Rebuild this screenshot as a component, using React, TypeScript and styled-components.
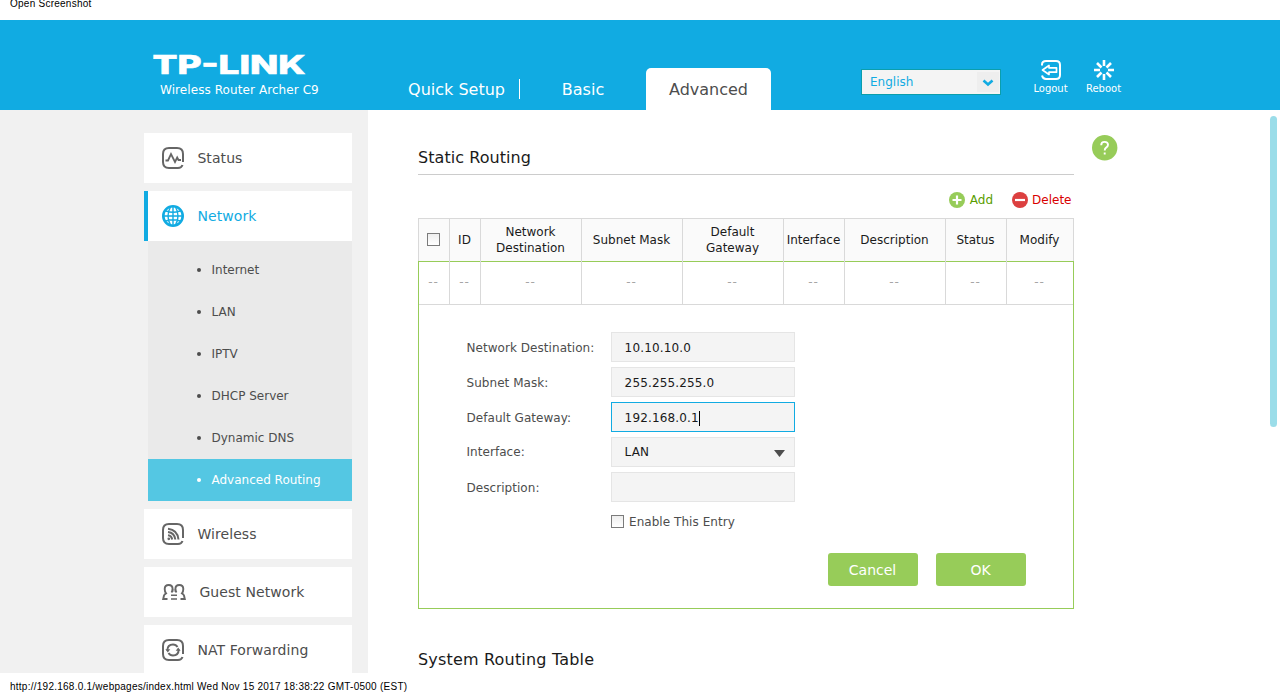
import type { ReactNode } from 'react'
import styled, { createGlobalStyle, css } from 'styled-components'

const GlobalStyle = createGlobalStyle`
  * {
    box-sizing: border-box;
  }

  body {
    margin: 0;
    background: #fff;
    color: #4d4d4d;
    font-family: 'DejaVu Sans', Verdana, sans-serif;
    font-size: 12px;
    overflow: hidden;
  }
`

const Page = styled.div`
  display: flex;
  flex-direction: column;
  height: 693px;
  overflow: hidden;
`

const Caption = styled.div<{ $top?: boolean }>`
  flex: none;
  height: 20px;
  padding-left: 10px;
  color: #000;
  font: 10px/12px 'Liberation Sans', Arial, sans-serif;
  letter-spacing: 0.25px;
  ${({ $top }) =>
    $top
      ? css`
          line-height: 8px;
        `
      : css`
          padding-top: 8px;
        `}
`

const Header = styled.header`
  display: flex;
  flex: none;
  height: 90px;
  padding-left: 144px;
  background: #11abe2;
  color: #fff;
`

const Brand = styled.div`
  width: 240px;
  padding: 26px 0 0 8px;
`

const LogoSvg = styled.svg`
  display: block;
`

const Model = styled.div`
  padding-left: 8px;
  line-height: 16px;
  letter-spacing: 0.08px;
`

const Tabs = styled.nav`
  display: flex;
  align-items: flex-end;
  width: 477px;
`

const Tab = styled.a<{ $active?: boolean; $divider?: boolean }>`
  position: relative;
  display: flex;
  align-items: center;
  justify-content: center;
  width: ${({ $active, $divider }) => ($active ? 125 : $divider ? 136 : 126)}px;
  height: 42px;
  font-size: 16px;
  ${({ $divider }) =>
    $divider &&
    css`
      padding-left: 9px;

      &::after {
        content: '';
        position: absolute;
        right: 0;
        top: 11px;
        height: 20px;
        border-right: 1px solid #fff;
      }
    `}
  ${({ $active }) =>
    $active &&
    css`
      background: #fff;
      color: #4d4d4d;
      border-radius: 5px 5px 0 0;
    `}
`

const Language = styled.div`
  display: flex;
  align-items: center;
  justify-content: space-between;
  width: 140px;
  height: 26px;
  margin-top: 49px;
  padding: 0 1px 0 8px;
  background: #f4f4f4;
  border: 1px solid #0b9eac;
  color: #11abe2;
`

const LanguageArrow = styled.span`
  display: flex;
  align-items: center;
  justify-content: center;
  width: 22px;
  height: 20px;
  padding-top: 1px;
  background: #eee;
`

const HeaderAction = styled.a`
  display: flex;
  flex-direction: column;
  align-items: center;
  width: 53px;
  padding-top: 39px;
  font-size: 10px;
  line-height: 14px;

  svg {
    flex: none;
    margin-bottom: 1px;
  }
`

const HeaderActions = styled.div`
  display: flex;
  padding-left: 23px;
`

const Body = styled.div`
  display: flex;
  flex: 1;
  min-height: 0;
  overflow: hidden;
`

const Sidebar = styled.aside`
  display: flex;
  flex: none;
  flex-direction: column;
  gap: 8px;
  width: 368px;
  padding: 23px 16px 0 144px;
  background: #f1f1f1;
`

const MenuItem = styled.a<{ $active?: boolean }>`
  display: flex;
  flex: none;
  align-items: center;
  gap: 13.4px;
  height: 50px;
  padding-left: ${({ $active }) => ($active ? 14 : 18)}px;
  background: #fff;
  border-left: ${({ $active }) => ($active ? '4px solid #11abe2' : '0')};
  color: ${({ $active }) => ($active ? '#11abe2' : '#4d4d4d')};
  font-size: 14px;
  letter-spacing: 0.08px;
`

const Submenu = styled.ul`
  margin: 0 0 0 4px;
  padding: 8px 0 0;
  background: #eaeaea;
  list-style: none;
`

const SubmenuItem = styled.li<{ $active?: boolean }>`
  display: flex;
  align-items: center;
  gap: 10.5px;
  height: 42px;
  padding-left: 49px;
  background: ${({ $active }) => ($active ? '#54c7e3' : 'transparent')};
  color: ${({ $active }) => ($active ? '#fff' : '#4d4d4d')};

  &::before {
    content: '';
    width: 4px;
    height: 4px;
    border-radius: 50%;
    background: currentColor;
  }
`

const Main = styled.main`
  flex: none;
  width: 656px;
  margin-left: 50px;
`

const SectionTitle = styled.h2`
  height: 65px;
  margin: 0;
  padding-top: 38px;
  border-bottom: 1px solid #ccc;
  color: #1a1a1a;
  font-size: 16px;
  font-weight: 400;
  line-height: 20px;
  letter-spacing: 0.05px;
`

const Toolbar = styled.div`
  display: flex;
  align-items: center;
  justify-content: flex-end;
  gap: 18.5px;
  height: 43px;
  padding: 7px 2.5px 0 0;
`

const ToolbarButton = styled.a<{ $color: string }>`
  display: flex;
  align-items: center;
  gap: 4.5px;
  color: ${({ $color }) => $color};
`

const columns = '31px 31px 101px 101px 101px 61px 101px 61px 1fr'

const HeadRow = styled.div`
  display: grid;
  grid-template-columns: ${columns};
  height: 43px;
  background: #fafafa;
  border: 1px solid #d9d9d9;
  border-bottom: 0;
  color: #1a1a1a;
`

const EmptyRow = styled.div`
  display: grid;
  grid-template-columns: ${columns};
  height: 44px;
  border-bottom: 1px solid #d9d9d9;
  color: #a6a6a6;
  letter-spacing: 1px;
`

const Cell = styled.div`
  display: flex;
  align-items: center;
  justify-content: center;
  padding: 0 1px 1px 0;
  text-align: center;
  line-height: 16px;
  border-right: 1px solid #d9d9d9;

  &:last-child {
    border-right: 0;
  }

  ${EmptyRow} & {
    box-shadow: inset 0 1px #97cc59;
  }
`

const EditPanel = styled.div`
  height: 348px;
  border: solid #97cc59;
  border-width: 0 1px 1px;
`

const Form = styled.div`
  display: flex;
  flex-direction: column;
  gap: 5px;
  padding: 27px 47px 0 47px;
`

const Field = styled.div`
  display: flex;
  height: 30px;
`

const Label = styled.label<{ $raised?: boolean }>`
  width: 145px;
  padding-left: 0.5px;
  line-height: ${({ $raised }) => ($raised ? 30 : 32)}px;
  letter-spacing: 0.05px;
`

const Input = styled.div<{ $focused?: boolean }>`
  display: flex;
  align-items: center;
  justify-content: space-between;
  width: 184px;
  padding: 0 9px 0 12.6px;
  background: #f4f4f4;
  border: 1px solid ${({ $focused }) => ($focused ? '#11abe2' : '#e5e5e5')};
  color: #1a1a1a;
  letter-spacing: 0.15px;
`

const Value = styled.span<{ $caret?: boolean; $raised?: boolean }>`
  margin-top: ${({ $raised }) => ($raised ? 0 : 2)}px;
  line-height: 15px;
  border-right: ${({ $caret }) => ($caret ? '1px solid #000' : '0')};
`

const Checkbox = styled.span`
  flex: none;
  width: 13px;
  height: 13px;
  border: 1px solid #7b7b7b;
  background: linear-gradient(#eee, #fff);
`

const EnableRow = styled.div`
  display: flex;
  align-items: center;
  gap: 5px;
  height: 16px;
  margin: 7px 0 0 145px;
  letter-spacing: 0.05px;

  ${Checkbox} {
    margin-bottom: 2px;
  }
`

const Buttons = styled.div`
  display: flex;
  justify-content: flex-end;
  gap: 18px;
  margin-top: 18px;
`

const ActionButton = styled.button`
  width: 90px;
  height: 33px;
  padding: 0 1px 0 0;
  background: #97cc59;
  border: 0;
  border-radius: 3px;
  color: #fff;
  font: 14px 'DejaVu Sans', Verdana, sans-serif;
`

const NextTitle = styled.h2`
  margin: 41px 0 0;
  color: #1a1a1a;
  font-size: 16px;
  font-weight: 400;
  line-height: 20px;
  letter-spacing: 0.18px;
`

const HelpButton = styled.div`
  margin: 25px 0 0 18px;
`

const Scrollbar = styled.div`
  width: 7px;
  height: 311px;
  margin: 6px 3px 0 auto;
  background: #9bdde9;
  border-radius: 4px;
`

const Logo = () => (
  <LogoSvg width="170" height="36" viewBox="0 0 170 36" fill="#fff">
    <text
      x="0.5"
      y="27.6"
      textLength="153"
      lengthAdjust="spacingAndGlyphs"
      fontFamily="Inter, 'Liberation Sans', sans-serif"
      fontWeight="800"
      fontSize="26"
      stroke="#fff"
      strokeWidth="0.6"
    >
      TP-LINK
    </text>
  </LogoSvg>
)

const LogoutIcon = () => (
  <svg width="22" height="22" viewBox="0 0 22 22" fill="none" stroke="#fff" strokeWidth="2">
    <path d="M2 6.5V5.5Q2 2 6 2H16Q20 2 20 6V16Q20 20 16 20H6Q2.8 20 2 16.5" />
    <path d="M2.5 11L9 6.5V8.8H16.5V13.2H9V15.5Z" strokeWidth="1.7" strokeLinejoin="round" />
  </svg>
)

const RebootIcon = () => (
  <svg width="22" height="22" viewBox="0 0 22 22" stroke="#fff" strokeWidth="2.6">
    <path d="M11 1V7M11 15V21M1 11H7M15 11H21M4 4L8.5 8.5M13.5 13.5L18 18M18 4L13.5 8.5M8.5 13.5L4 18" />
  </svg>
)

// Rounded tile with a notch at the lower right, shared by most menu icons
const TileIcon = ({ children }: { children: ReactNode }) => (
  <svg width="22" height="22" viewBox="0 0 22 22" fill="none" stroke="#666" strokeWidth="2">
    <path d="M21 15V7Q21 1 15 1H7Q1 1 1 7V15Q1 21 7 21H16Q19.5 21 20.5 18" />
    {children}
  </svg>
)

const StatusIcon = () => (
  <TileIcon>
    <path d="M3.5 13.5H6L9 7L13 15L15.2 10.5L16.5 13H19" strokeWidth="1.8" />
  </TileIcon>
)

const GlobeIcon = () => (
  <svg width="22" height="22" viewBox="0 0 22 22" fill="none" stroke="#11abe2">
    <circle cx="11" cy="11" r="9.7" strokeWidth="2.6" />
    <path
      d="M11 1V21M2 11H20M4 6Q11 8.5 18 6M4 16Q11 13.5 18 16M8.5 2Q3.5 11 8.5 20M13.5 2Q18.5 11 13.5 20"
      strokeWidth="1.4"
    />
  </svg>
)

const WirelessIcon = () => (
  <TileIcon>
    <path
      d="M6 5.7Q15.5 6.7 16.5 16.5M6 9Q12.5 9.7 13.3 16.5M6 12.2Q9.5 12.7 10.2 16.5"
      strokeWidth="2"
    />
    <circle cx="6.8" cy="15.8" r="1.4" fill="#666" stroke="none" />
  </TileIcon>
)

const GuestIcon = () => (
  <svg width="24" height="16" viewBox="0 0 24 16" fill="none" stroke="#666" strokeWidth="1.9">
    <path d="M5.5 15H1.2L2 11.5Q2.5 10 4 9.3Q2.7 7.5 2.7 5Q2.7 1 6.7 1Q10.6 1 10.6 5Q10.6 7 9.5 8.5" />
    <path d="M18.5 15H22.8L22 11.5Q21.5 10 20 9.3Q21.3 7.5 21.3 5Q21.3 1 17.3 1Q13.4 1 13.4 5Q13.4 7 14.5 8.5" />
    <path d="M9 11.3H15M9 15H15M10.6 5V8M13.4 5V8" strokeWidth="1.5" />
  </svg>
)

const NatIcon = () => (
  <TileIcon>
    <path d="M5.3 11.5Q5.5 5.5 11 5.5Q14 5.5 15.5 8M16.7 10.5Q16.5 16.5 11 16.5Q8 16.5 6.5 14" />
    <path d="M3.4 10.3H8.3L5.8 13.5ZM13.7 11.7H18.6L16.2 8.5Z" fill="#666" stroke="none" />
  </TileIcon>
)

const RoundIcon = ({ color, plus }: { color: string; plus?: boolean }) => (
  <svg width="16" height="16" viewBox="0 0 16 16">
    <circle cx="8" cy="8" r="8" fill={color} />
    <path d={plus ? 'M3.5 8H12.5M8 3.5V12.5' : 'M3 8H13'} stroke="#fff" strokeWidth="2.2" />
  </svg>
)

const submenu = ['Internet', 'LAN', 'IPTV', 'DHCP Server', 'Dynamic DNS', 'Advanced Routing']

const headings = [
  'ID',
  'Network Destination',
  'Subnet Mask',
  'Default Gateway',
  'Interface',
  'Description',
  'Status',
  'Modify',
]

const fields = [
  { label: 'Network Destination:', value: '10.10.10.0' },
  { label: 'Subnet Mask:', value: '255.255.255.0' },
  { label: 'Default Gateway:', value: '192.168.0.1', focused: true },
  { label: 'Interface:', value: 'LAN', select: true },
  { label: 'Description:', value: '' },
]

const PageHeader = () => (
  <Header>
    <Brand>
      <Logo />
      <Model>Wireless Router Archer C9</Model>
    </Brand>
    <Tabs>
      <Tab $divider>Quick Setup</Tab>
      <Tab>Basic</Tab>
      <Tab $active>Advanced</Tab>
    </Tabs>
    <Language>
      English
      <LanguageArrow>
        <svg width="12" height="8" viewBox="0 0 12 8" fill="none" stroke="#11abe2" strokeWidth="2.6">
          <path d="M1.5 1.5L6 5.5L10.5 1.5" />
        </svg>
      </LanguageArrow>
    </Language>
    <HeaderActions>
      <HeaderAction>
        <LogoutIcon />
        Logout
      </HeaderAction>
      <HeaderAction>
        <RebootIcon />
        Reboot
      </HeaderAction>
    </HeaderActions>
  </Header>
)

const Menu = () => (
  <Sidebar>
    <MenuItem>
      <StatusIcon />
      Status
    </MenuItem>
    <div>
      <MenuItem $active>
        <GlobeIcon />
        Network
      </MenuItem>
      <Submenu>
        {submenu.map((item) => (
          <SubmenuItem key={item} $active={item === 'Advanced Routing'}>
            {item}
          </SubmenuItem>
        ))}
      </Submenu>
    </div>
    <MenuItem>
      <WirelessIcon />
      Wireless
    </MenuItem>
    <MenuItem>
      <GuestIcon />
      Guest Network
    </MenuItem>
    <MenuItem>
      <NatIcon />
      NAT Forwarding
    </MenuItem>
  </Sidebar>
)

const RouteForm = () => (
  <Form>
    {fields.map(({ label, value, focused, select }) => (
      <Field key={label}>
        <Label $raised={select}>{label}</Label>
        <Input $focused={focused}>
          <Value $caret={focused} $raised={select}>
            {value}
          </Value>
          {select && (
            <svg width="11" height="9" viewBox="0 0 11 9" fill="#4d4d4d">
              <path d="M0 2H11L5.5 9Z" />
            </svg>
          )}
        </Input>
      </Field>
    ))}
    <EnableRow>
      <Checkbox />
      Enable This Entry
    </EnableRow>
    <Buttons>
      <ActionButton>Cancel</ActionButton>
      <ActionButton>OK</ActionButton>
    </Buttons>
  </Form>
)

const App = () => (
  <>
    <GlobalStyle />
    <Page>
      <Caption $top>Open Screenshot</Caption>
      <PageHeader />
      <Body>
        <Menu />
        <Main>
          <SectionTitle>Static Routing</SectionTitle>
          <Toolbar>
            <ToolbarButton $color="#599e00">
              <RoundIcon color="#97cc59" plus />
              Add
            </ToolbarButton>
            <ToolbarButton $color="#d90000">
              <RoundIcon color="#dc4040" />
              Delete
            </ToolbarButton>
          </Toolbar>
          <HeadRow>
            <Cell>
              <Checkbox />
            </Cell>
            {headings.map((heading) => (
              <Cell key={heading}>{heading}</Cell>
            ))}
          </HeadRow>
          <EditPanel>
            <EmptyRow>
              {['select', ...headings].map((column) => (
                <Cell key={column}>--</Cell>
              ))}
            </EmptyRow>
            <RouteForm />
          </EditPanel>
          <NextTitle>System Routing Table</NextTitle>
        </Main>
        <HelpButton>
          <svg width="26" height="26" viewBox="0 0 26 26">
            <circle cx="12.7" cy="12.8" r="12.7" fill="#97cc59" />
            <path
              d="M9.2 10.2Q9.2 6.9 12.5 6.9Q16 6.9 16 9.8Q16 11.4 14.2 12.6Q12.7 13.7 12.7 15.4M12.7 17.4V19.4"
              fill="none"
              stroke="#fff"
              strokeWidth="1.9"
            />
          </svg>
        </HelpButton>
        <Scrollbar />
      </Body>
      <Caption>http://192.168.0.1/webpages/index.html Wed Nov 15 2017 18:38:22 GMT-0500 (EST)</Caption>
    </Page>
  </>
)

export default App
